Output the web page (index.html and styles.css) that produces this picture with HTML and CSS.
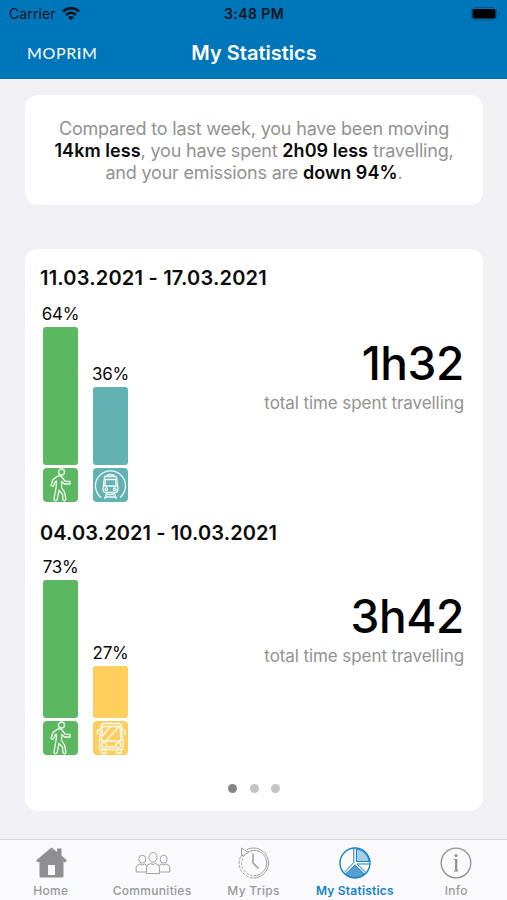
FILE: index.html
```
<!DOCTYPE html>
<html lang="en">
<head>
    <meta charset="UTF-8">
    <meta name="viewport" content="width=device-width, initial-scale=1.0">
    <title>My Statistics</title>
    <link rel="stylesheet" href="styles.css">
</head>
<body>
    <!-- Icons used more than once -->
    <svg class="hidden">
        <symbol id="walk" viewBox="0 0 34 34">
            <circle cx="18" cy="4" r="3"/>
            <path d="M13.5 8.5 L9.5 11.5 L7.5 17.5 L9.5 18.5 L12 13.5 L13 13 L12.5 20 L10.5 30.5 C10 33 13 33.5 13.8 31 L15.5 22.5 L19 26 L19.5 31.5 C20 33.5 22.8 33 22.3 30.5 L21 24 L18 19.5 L18.3 13.5 L21 16 L26.5 16 L26.5 13.5 L21.5 13.2 L18.5 9 C17.5 7.5 15.5 7.5 13.5 8.5 Z"/>
        </symbol>
    </svg>

    <!-- Status bar and title -->
    <div class="header">
        <div class="status-bar">
            <div class="carrier">
                <span>Carrier</span>
                <svg width="18" height="14" viewBox="0 0 18 14" fill="none" stroke="#06131c" stroke-width="2.6">
                    <path d="M1 4.5 C5.5 0 12.5 0 17 4.5"/>
                    <path d="M4 8 C7 5.1 11 5.1 14 8"/>
                    <path d="M9 13.2 L6 10.3 C7.8 8.7 10.2 8.7 12 10.3 Z" fill="#06131c" stroke="none"/>
                </svg>
            </div>
            <div class="clock">3:48 PM</div>
            <svg class="battery" width="30" height="14" viewBox="0 0 30 14">
                <rect x="0.5" y="0.5" width="25" height="12.5" rx="3.5" fill="none" stroke="#04588a"/>
                <rect x="1.5" y="2" width="23" height="9.5" rx="2" fill="#000"/>
                <path d="M27 4.8 C29 5.5 29 8 27 8.7 Z" fill="#04588a"/>
            </svg>
        </div>
        <div class="nav-bar">
            <div class="logo">MOPR<span class="small-i">i</span>M</div>
            <h1>My Statistics</h1>
        </div>
    </div>

    <div class="content">
        <div class="card summary">
            Compared to last week, you have been moving<br>
            <b>14km less</b>, you have spent <b>2h09 less</b> travelling,<br>
            and your emissions are <b>down 94%</b>.
        </div>

        <div class="card stats">
            <div class="week">
                <h2>11.03.2021 - 17.03.2021</h2>
                <div class="week-body">
                    <div class="chart">
                        <div class="column">
                            <span class="percent">64%</span>
                            <div class="bar green" style="height: 138px"></div>
                            <svg class="mode green"><use href="#walk"/></svg>
                        </div>
                        <div class="column">
                            <span class="percent">36%</span>
                            <div class="bar teal" style="height: 78px"></div>
                            <svg class="mode teal" viewBox="0 0 34 34">
                                <path d="M7.5 29.5 A15 15 0 1 1 26.5 29.5"/>
                                <path d="M11 8.5 H23 L24.5 21 Q24.5 24.5 21.5 24.5 H12.5 Q9.5 24.5 9.5 21 Z"/>
                                <path d="M12 11.5 H22 L22.7 18 H11.3 Z M13 8.5 Q13.5 6.5 17 6.5 Q20.5 6.5 21 8.5 M13.5 24.5 L11 31 M20.5 24.5 L23 31 M13 26.5 H21 M11.8 29 H22.2"/>
                                <circle cx="12.8" cy="21.2" r="1.3"/>
                                <circle cx="21.2" cy="21.2" r="1.3"/>
                            </svg>
                        </div>
                    </div>
                    <div class="total">
                        <div class="time">1h32</div>
                        <div class="caption">total time spent travelling</div>
                    </div>
                </div>
            </div>

            <div class="week second">
                <h2>04.03.2021 - 10.03.2021</h2>
                <div class="week-body">
                    <div class="chart">
                        <div class="column">
                            <span class="percent">73%</span>
                            <div class="bar green" style="height: 138px"></div>
                            <svg class="mode green"><use href="#walk"/></svg>
                        </div>
                        <div class="column">
                            <span class="percent">27%</span>
                            <div class="bar yellow" style="height: 52px"></div>
                            <svg class="mode yellow" viewBox="0 0 34 34">
                                <path d="M6 28.5 V20 L7.5 5 Q8 2.5 11 2.5 H24.5 Q27.5 2.5 28 5 L29.5 20 V28.5 Z"/>
                                <path d="M8 20 L9 5.5 H26.5 L27.5 20 Z M8.5 15.5 L17 5.5 M12.5 20 L25 6 M7 8 L4 9.5 V14 M28.5 8 L31.5 9.5 V14"/>
                                <circle cx="10.5" cy="24.2" r="2.5"/>
                                <circle cx="25" cy="24.2" r="2.5"/>
                                <path d="M14 26 H21.5 M8 28.5 V32 H12.5 V28.5 M23 28.5 V32 H27.5 V28.5"/>
                            </svg>
                        </div>
                    </div>
                    <div class="total">
                        <div class="time">3h42</div>
                        <div class="caption">total time spent travelling</div>
                    </div>
                </div>
            </div>

            <div class="dots">
                <span class="dot current"></span>
                <span class="dot"></span>
                <span class="dot"></span>
            </div>
        </div>
    </div>

    <!-- Bottom tabs -->
    <div class="tab-bar">
        <div class="tab">
            <svg width="36" height="34" viewBox="0 0 36 34">
                <path d="M18.5 1.5 L24 6 V2.5 H28.5 V9.5 L34 14.5 L32 16.5 L30.5 15.5 V30 Q30.5 31.5 29 31.5 H8 Q6.5 31.5 6.5 30 V15.5 L5 16.5 L3 14.5 Z M15 19 V29 H22 V19 Z" fill="#8e8e93" fill-rule="evenodd"/>
            </svg>
            <span>Home</span>
        </div>
        <div class="tab">
            <svg class="line" width="38" height="34" viewBox="0 0 38 34">
                <ellipse cx="20" cy="11.3" rx="4" ry="4.8"/>
                <ellipse cx="9.3" cy="13.2" rx="3.5" ry="4"/>
                <ellipse cx="30.7" cy="13.2" rx="3.5" ry="4"/>
                <path d="M13.5 27.5 V21.5 Q13.5 18.5 17.5 17.5 Q20 19.5 22.5 17.5 Q26.5 18.5 26.5 21.5 V27.5 Z"/>
                <path d="M13.5 26 H3.2 V21.5 Q3.2 19 7 18 Q9.3 20 11.6 18 L14 19.5 M26.5 26 H36.8 V21.5 Q36.8 19 33 18 Q30.7 20 28.4 18 L26 19.5"/>
            </svg>
            <span>Communities</span>
        </div>
        <div class="tab">
            <svg class="line" width="36" height="34" viewBox="0 0 36 34">
                <path d="M12 3.5 A15 15 0 1 1 18.5 32"/>
                <path d="M13 6 A12.6 12.6 0 1 1 18.5 29.6"/>
                <path d="M8 7 A15 15 0 0 0 18 32" stroke-dasharray="3 1.3"/>
                <path d="M9.5 9 A12.6 12.6 0 0 0 18 29.6" stroke-dasharray="2.5 1.5"/>
                <path d="M6.5 2 L13.5 6.5 L6.5 10 Z" fill="#fafafb"/>
                <path d="M18 7.5 V17 L23.5 22.5" stroke-width="1.6"/>
            </svg>
            <span>My Trips</span>
        </div>
        <div class="tab active">
            <svg width="36" height="34" viewBox="0 0 36 34" fill="none" stroke="#1681c4">
                <circle cx="18" cy="17" r="15" stroke-width="1.4"/>
                <path d="M19.5 3 A14 14 0 0 1 32 15.5 H19.5 Z" fill="#a5cfe9"/>
                <path d="M18 19 L27.5 28 A14 14 0 0 1 8.5 28 Z" fill="#579fd0"/>
                <path d="M16.8 2.5 V16.5 L7.3 26.5 M20 18 H32.5 M20 18 L29 26.5"/>
            </svg>
            <span>My Statistics</span>
        </div>
        <div class="tab">
            <svg width="36" height="34" viewBox="0 0 36 34" fill="none" stroke="#8e8e93">
                <circle cx="18" cy="17" r="14.8" stroke-width="1.3"/>
                <circle cx="18" cy="9.5" r="1.5" fill="#8e8e93" stroke="none"/>
                <path d="M18.2 13 V25" stroke-width="2.2"/>
                <path d="M16 13.5 H18 M16 25 H20.4"/>
            </svg>
            <span>Info</span>
        </div>
    </div>
</body>
</html>
```

FILE: styles.css
```
* {
    box-sizing: border-box;
}
body {
    display: flex;
    flex-direction: column;
    height: 100vh;
    margin: 0;
    font-family: Inter, "Liberation Sans", sans-serif;
    background-color: #f0f0f5;
    color: #0b0b0b;
    overflow: hidden;
}
svg {
    display: block;
    flex-shrink: 0;
}
.hidden {
    display: none;
}
.header {
    height: 79px;
    background-color: #0076ba;
}
.status-bar {
    display: grid;
    grid-template-columns: 1fr auto 1fr;
    align-items: center;
    height: 27px;
    padding: 0 6px 0 9px;
    font-size: 14px;
    color: #06131c;
}
.carrier {
    display: flex;
    align-items: center;
    gap: 6px;
    letter-spacing: 0.1px;
}
.clock {
    padding-right: 2px;
    font-weight: 600;
    letter-spacing: 0.4px;
}
.battery {
    justify-self: end;
}
.nav-bar {
    display: grid;
    grid-template-columns: 1fr auto 1fr;
    align-items: center;
    height: 51px;
    padding: 0 27px;
    color: #fff;
}
.logo {
    font-family: Lato, sans-serif;
    font-size: 16px;
    letter-spacing: 0.7px;
}
.small-i {
    font-weight: 700;
}
h1 {
    margin: 0;
    padding-left: 1px;
    font-size: 20px;
    font-weight: 600;
}
.content {
    flex: 1;
    padding: 16px 24px 0 25px;
}
.card {
    background-color: #fff;
    border-radius: 13px;
}
.summary {
    height: 110px;
    margin-bottom: 44px;
    padding-top: 23px;
    font-size: 18px;
    line-height: 22px;
    letter-spacing: -0.19px;
    text-align: center;
    white-space: nowrap;
    color: #929292;
}
.summary b {
    font-weight: 600;
    letter-spacing: 0.05px;
    color: #0b0b0b;
}
.stats {
    height: 562px;
    padding: 17px 19px 0 15px;
}
.week {
    height: 253px;
}
h2 {
    margin: 0;
    font-size: 20px;
    font-weight: 600;
    line-height: 24px;
    letter-spacing: 0.2px;
}
.second h2 {
    padding-top: 2px;
    letter-spacing: 0.1px;
}
.week-body {
    display: flex;
    justify-content: space-between;
    height: 212px;
}
.second .week-body {
    height: 210px;
}
.second .total {
    padding-top: 43px;
}
.chart {
    display: flex;
    align-items: flex-end;
}
.column {
    display: flex;
    flex-direction: column;
    align-items: center;
    gap: 3px;
    width: 50px;
    padding-right: 9px;
}
.percent {
    font-size: 17px;
    line-height: 20px;
    letter-spacing: -0.3px;
}
.bar {
    width: 35px;
    border-radius: 3px;
}
.mode {
    width: 35px;
    height: 34px;
    border-radius: 4px;
    fill: none;
    stroke: #f2faf4;
    stroke-width: 1.3;
    stroke-linejoin: round;
}
.green {
    background-color: #5cb860;
}
.teal {
    background-color: #62b1b3;
}
.yellow {
    background-color: #ffce5c;
}
.total {
    padding-top: 45px;
    text-align: right;
}
.time {
    font-size: 46px;
    font-weight: 500;
    line-height: 56px;
    letter-spacing: -0.4px;
    color: #000;
}
.caption {
    margin-top: 1px;
    font-size: 17px;
    line-height: 22px;
    letter-spacing: -0.08px;
    color: #929292;
}
.dots {
    display: flex;
    justify-content: center;
    gap: 12.5px;
    padding: 12px 0 0 4px;
}
.dot {
    width: 9px;
    height: 9px;
    border-radius: 50%;
    background-color: #c4c4c6;
}
.current {
    background-color: #858587;
}
.tab-bar {
    display: grid;
    grid-template-columns: repeat(5, 1fr);
    height: 61px;
    padding-top: 6px;
    border-top: 1px solid #d5d5da;
    background-color: #fafafc;
}
.tab {
    display: flex;
    flex-direction: column;
    align-items: center;
    gap: 3px;
    font-size: 12px;
    font-weight: 500;
    line-height: 15px;
    letter-spacing: 0.3px;
    color: #98989b;
    white-space: nowrap;
}
.active {
    color: #1681c4;
    font-weight: 600;
    letter-spacing: 0.2px;
}
.line {
    fill: none;
    stroke: #a2a2a6;
    stroke-width: 1;
}
```
